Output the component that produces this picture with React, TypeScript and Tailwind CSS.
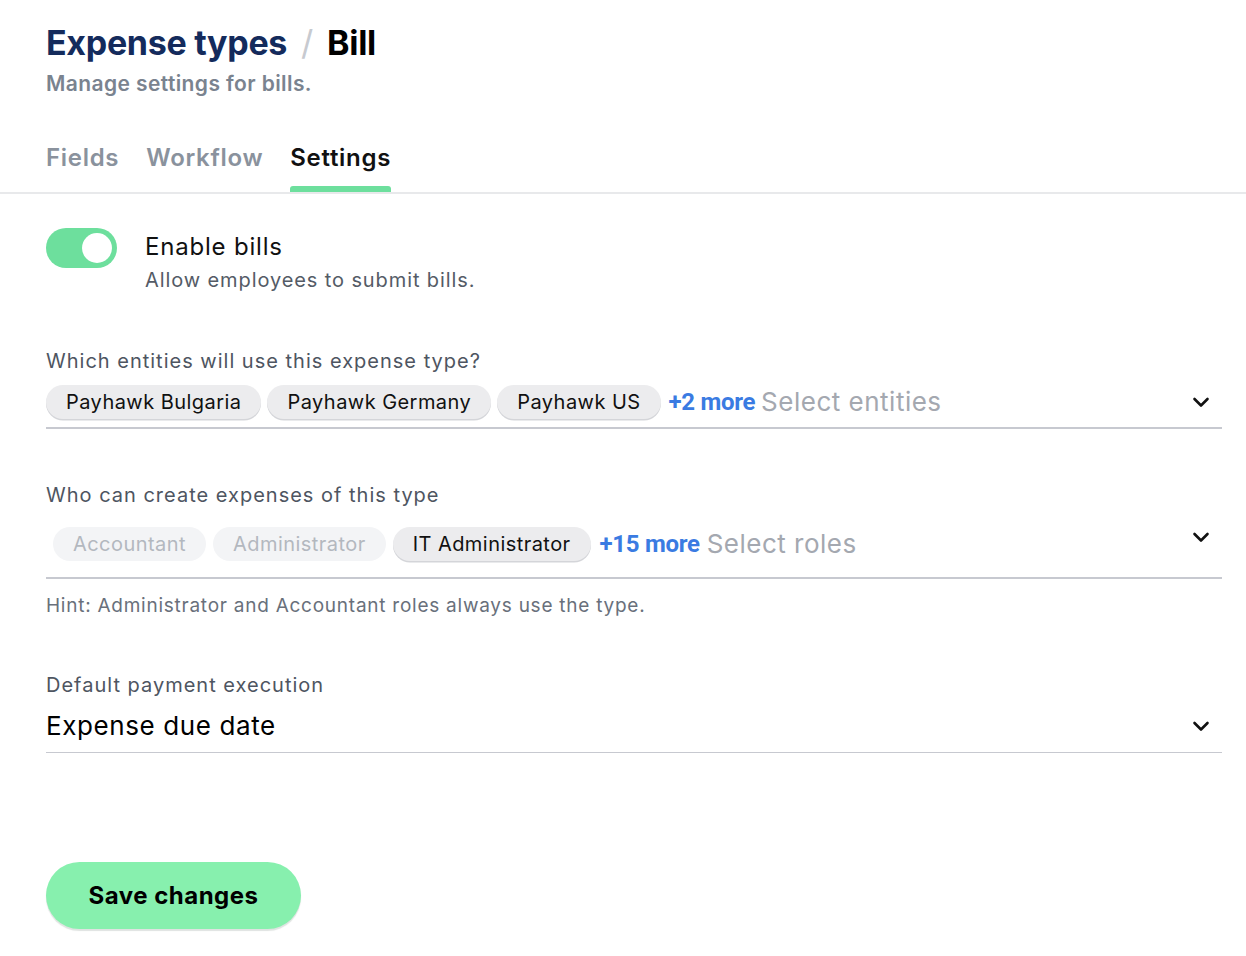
import React, { useState } from "react";

interface Chip {
    label: string;
    disabled?: boolean;
}

const entities: Chip[] = [
    { label: "Payhawk Bulgaria" },
    { label: "Payhawk Germany" },
    { label: "Payhawk US" },
];

const roles: Chip[] = [
    { label: "Accountant", disabled: true },
    { label: "Administrator", disabled: true },
    { label: "IT Administrator" },
];

function Chevron() {
    return (
        <svg width="18" height="12" viewBox="0 0 18 12" fill="none" className="shrink-0">
            <path d="M2.5 3l6.5 6.5L15.5 3" stroke="#111" strokeWidth="2.6" strokeLinecap="round" strokeLinejoin="round" />
        </svg>
    );
}

function Tag({ chip }: { chip: Chip }) {
    return (
        <span
            className={
                chip.disabled
                    ? "h-[34px] flex items-center px-5 rounded-full bg-[#f3f4f6] text-[#b3b8bf] text-[20px] tracking-[0.45px] whitespace-nowrap"
                    : "h-[34px] flex items-center px-5 rounded-full bg-[#ececee] text-[#111] text-[20px] tracking-[0.45px] whitespace-nowrap shadow-[0_1.5px_0_#d4d5d9]"
            }
        >
            {chip.label}
        </span>
    );
}

function MultiSelect({ chips, more, placeholder, inset }: { chips: Chip[]; more: string; placeholder: string; inset?: boolean }) {
    return (
        <div className="flex items-center border-b-2 border-[#c7c9d0] pb-[8px]">
            <div className={inset ? "flex items-center gap-[7px] flex-1 pl-[7px] pt-[6px] pb-[8px]" : "flex items-center gap-[6px] flex-1"}>
                {chips.map((c) => (
                    <Tag key={c.label} chip={c} />
                ))}
                <span className="ml-[2px] text-[24px] leading-[34px] font-bold text-[#3a7be2] font-['Roboto',sans-serif] tracking-[-0.3px]">{more}</span>
                <span className="text-[26px] leading-[34px] tracking-[0.5px] text-[#a4a8b0]">{placeholder}</span>
            </div>
            <div className={inset ? "pr-[12px] pb-[16px]" : "pr-[12px]"}>
                <Chevron />
            </div>
        </div>
    );
}

export default function App() {
    const [enabled, setEnabled] = useState(true);
    const tabs = ["Fields", "Workflow", "Settings"];
    const active = "Settings";

    return (
        <div className="min-h-[956px] w-[1246px] bg-white font-['Inter',sans-serif] text-[#111]">
            {/* Header */}
            <div className="pl-[46px] pt-[22px]">
                <h1 className="text-[34px] font-bold leading-[42px] tracking-[-0.3px] flex items-center">
                    <span className="text-[#142b5c]">Expense types</span>
                    <span className="text-[#c7cad0] font-normal mx-[14px]">/</span>
                    <span className="text-black">Bill</span>
                </h1>
                <p className="mt-[6px] text-[21px] font-semibold text-[#7a838f] leading-[28px] tracking-[0.4px]">Manage settings for bills.</p>
            </div>

            {/* Tabs */}
            <div className="mt-[44px] border-b-2 border-[#e8e9eb] pl-[46px] flex gap-[27px]">
                {tabs.map((t) => (
                    <div key={t} className="flex flex-col">
                        <span className={t === active ? "text-[24px] font-semibold text-[#111] leading-[32px] tracking-[0.7px]" : "text-[24px] font-semibold text-[#8a929d] leading-[32px] tracking-[0.7px]"}>
                            {t}
                        </span>
                        <span className={t === active ? "mt-[12px] h-[6px] rounded-t-[3px] bg-[#6ddf9d]" : "mt-[12px] h-[6px]"} />
                    </div>
                ))}
            </div>

            <div className="pl-[46px] pr-[24px]">
                {/* Toggle */}
                <div className="mt-[34px] flex items-start gap-[28px]">
                    <button
                        onClick={() => setEnabled(!enabled)}
                        className={enabled ? "w-[71px] h-[40px] rounded-full bg-[#6ddf9d] flex items-center justify-end px-[5px]" : "w-[71px] h-[40px] rounded-full bg-[#d1d5db] flex items-center justify-start px-[5px]"}
                    >
                        <span className="w-[30px] h-[30px] rounded-full bg-white" />
                    </button>
                    <div className="mt-[1px]">
                        <div className="text-[24px] leading-[36px] text-[#111] tracking-[0.8px]">Enable bills</div>
                        <div className="text-[20px] leading-[28px] text-[#545b66] mt-[1px] tracking-[0.9px]">Allow employees to submit bills.</div>
                    </div>
                </div>

                {/* Entities */}
                <div className="mt-[53px]">
                    <div className="text-[20px] leading-[28px] text-[#4e5561] mb-[10px] tracking-[1px]">Which entities will use this expense type?</div>
                    <MultiSelect chips={entities} more="+2 more" placeholder="Select entities" />
                </div>

                {/* Roles */}
                <div className="mt-[52px]">
                    <div className="text-[20px] leading-[28px] text-[#4e5561] mb-[12px] tracking-[1px]">Who can create expenses of this type</div>
                    <MultiSelect chips={roles} more="+15 more" placeholder="Select roles" inset />
                    <div className="mt-[14px] text-[19px] leading-[26px] text-[#69707b] tracking-[0.75px]">Hint: Administrator and Accountant roles always use the type.</div>
                </div>

                {/* Payment execution */}
                <div className="mt-[52px]">
                    <div className="text-[20px] leading-[28px] text-[#4e5561] tracking-[1px]">Default payment execution</div>
                    <div className="mt-[10px] flex items-center justify-between border-b border-[#c7c9d0] pb-[9px]">
                        <span className="text-[26px] leading-[34px] text-black tracking-[0.6px]">Expense due date</span>
                        <div className="pr-[12px]">
                            <Chevron />
                        </div>
                    </div>
                </div>

                <button className="mt-[109px] w-[255px] h-[67px] rounded-full bg-[#87f0ae] text-[24px] font-bold text-black tracking-[0.5px] shadow-[0_2px_1px_#dfe3e1]">
                    Save changes
                </button>
            </div>
        </div>
    );
}
